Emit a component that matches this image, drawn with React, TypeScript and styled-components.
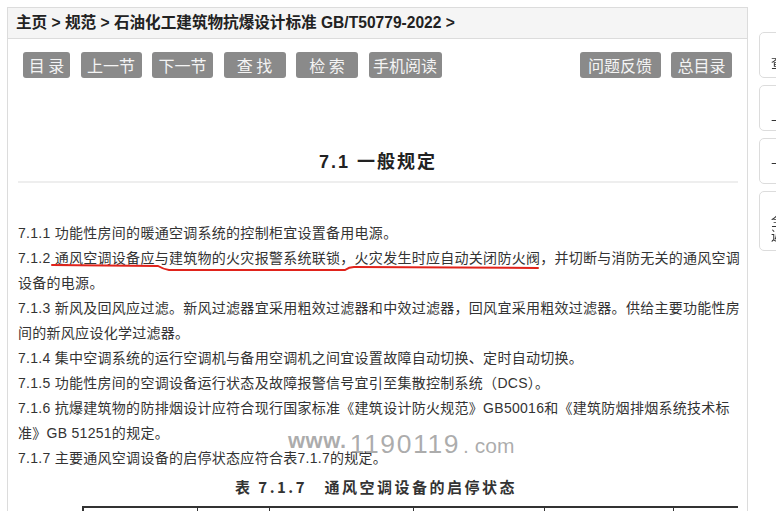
import styled, { createGlobalStyle } from "styled-components"
import React from "react"

const Global = createGlobalStyle`
  html, body {
    margin: 0;
    padding: 0;
    background: #fff;
    overflow: hidden;
  }
  body {
    font-family: "Liberation Sans", "Noto Sans CJK SC", sans-serif;
    color: #333;
  }
`

const leftBtns = [
  { t: "目 录", w: 47 },
  { t: "上一节", w: 61 },
  { t: "下一节", w: 61 },
  { t: "查 找", w: 62 },
  { t: "检 索", w: 62 },
  { t: "手机阅读", w: 73 },
]

const rightBtns = [
  { t: "问题反馈", w: 81 },
  { t: "总目录", w: 61 },
]

const side = [
  { t: ["查看"], h: 46 },
  { t: ["上一节"], h: 46 },
  { t: ["下一节"], h: 46 },
  { t: ["全文", "返回"], h: 60 },
]

const cols = [114, 72, 144, 131, 129]

const App = () => {
  return (
    <Page>
      <Global />
      <Container>
        <Crumb>主页 &gt; 规范 &gt; 石油化工建筑物抗爆设计标准 GB/T50779-2022 &gt;</Crumb>
        <Content>
          <Toolbar>
            <Group>
              {leftBtns.map((b) => (
                <Btn key={b.t} $w={b.w}>{b.t}</Btn>
              ))}
            </Group>
            <Group>
              {rightBtns.map((b) => (
                <Btn key={b.t} $w={b.w}>{b.t}</Btn>
              ))}
            </Group>
          </Toolbar>
          <Title>7.1 一般规定</Title>
          <Rule />
          <Body>
            <Line>7.1.1 功能性房间的暖通空调系统的控制柜宜设置备用电源。</Line>
            <Line>7.1.2 通风空调设备应与建筑物的火灾报警系统联锁，火灾发生时应自动关闭防火阀，并切断与消防无关的通风空调</Line>
            <Line>设备的电源。</Line>
            <Line>7.1.3 新风及回风应过滤。新风过滤器宜采用粗效过滤器和中效过滤器，回风宜采用粗效过滤器。供给主要功能性房</Line>
            <Line>间的新风应设化学过滤器。</Line>
            <Line>7.1.4 集中空调系统的运行空调机与备用空调机之间宜设置故障自动切换、定时自动切换。</Line>
            <Line>7.1.5 功能性房间的空调设备运行状态及故障报警信号宜引至集散控制系统（DCS）。</Line>
            <Line>7.1.6 抗爆建筑物的防排烟设计应符合现行国家标准《建筑设计防火规范》GB50016和《建筑防烟排烟系统技术标</Line>
            <Line>准》GB 51251的规定。</Line>
            <Line>7.1.7 主要通风空调设备的启停状态应符合表7.1.7的规定。</Line>
            <Mark viewBox="0 0 720 12" width="720" height="12">
              <path
                d="M34 2 L140 3 Q145 6 151 7 L327 7 Q331 4 336 4 L520 5"
                fill="none"
                stroke="#e0231b"
                strokeWidth="2"
                strokeLinecap="round"
              />
            </Mark>
            <Watermark>
              <Wm $s={22} $lift={5} $b>www.</Wm>
              <Wm $s={26.5} $ls={1.6}>1190119</Wm>
              <Wm $s={21} $ls={0}>. com</Wm>
            </Watermark>
          </Body>
          <Caption>表 7.1.7　通风空调设备的启停状态</Caption>
          <Table>
            {cols.map((w, i) => (
              <Cell key={i} $w={w} />
            ))}
          </Table>
        </Content>
      </Container>
      <Side>
        {side.map((s, i) => (
          <SideItem key={i} $h={s.h}>
            {s.t.map((l) => (
              <span key={l}>{l}</span>
            ))}
          </SideItem>
        ))}
      </Side>
    </Page>
  )
}

export default App

const Page = styled.div`
  width: 776px;
  height: 511px;
  padding: 7px 0 0 7px;
  box-sizing: border-box;
  overflow: hidden;
`

const Container = styled.div`
  width: 741px;
  height: 520px;
  box-sizing: border-box;
  border: 1px solid #dcdcdc;
  border-bottom: none;
`

const Crumb = styled.div`
  height: 30px;
  background: #f5f5f5;
  border-bottom: 1px solid #dcdcdc;
  padding-left: 8px;
  font-size: 15.6px;
  font-weight: bold;
  line-height: 30px;
  color: #222;
  white-space: nowrap;
`

const Content = styled.div`
  padding: 13px 9px 0 10px;
`

const Toolbar = styled.div`
  display: flex;
  justify-content: space-between;
  padding: 0 6px 0 5px;
`

const Group = styled.div`
  display: flex;
  gap: 10.5px;
`

const Btn = styled.div<{ $w: number }>`
  width: ${(p) => p.$w}px;
  height: 26px;
  background: #8a8a8a;
  border-radius: 3px;
  color: #f4f4f4;
  font-family: "Noto Sans CJK SC", sans-serif;
  font-size: 16px;
  line-height: 26px;
  text-align: center;
  white-space: nowrap;
`

const Title = styled.div`
  margin-top: 72px;
  height: 24px;
  text-align: center;
  font-family: "Liberation Sans", "Noto Sans CJK SC", sans-serif;
  font-size: 18px;
  font-weight: bold;
  line-height: 24px;
  letter-spacing: 2px;
  color: #222;
`

const Rule = styled.div`
  margin-top: 7px;
  height: 2px;
  background: #eeeeee;
`

const Body = styled.div`
  position: relative;
  margin-top: 38px;
`

const Line = styled.div`
  height: 25px;
  font-size: 14px;
  line-height: 25px;
  letter-spacing: 0.28px;
  color: #333;
  white-space: nowrap;
`

const Mark = styled.svg`
  position: absolute;
  left: 0;
  top: 42px;
`

const Watermark = styled.div`
  position: absolute;
  left: 270px;
  top: 208px;
  height: 30px;
  display: flex;
  align-items: baseline;
  gap: 3px;
  font-family: "Liberation Sans", sans-serif;
  line-height: 30px;
  color: rgba(150, 150, 150, 0.78);
  white-space: nowrap;
`

const Wm = styled.span<{ $s: number; $b?: boolean; $lift?: number; $ls?: number }>`
  position: relative;
  top: ${(p) => -(p.$lift || 0)}px;
  font-size: ${(p) => p.$s}px;
  font-weight: ${(p) => (p.$b ? "bold" : "normal")};
  letter-spacing: ${(p) => p.$ls ?? 0.5}px;
`

const Caption = styled.div`
  margin-top: 5px;
  height: 22px;
  text-align: center;
  padding-right: 4px;
  font-family: "Noto Sans CJK SC", sans-serif;
  font-size: 15px;
  font-weight: bold;
  letter-spacing: 2.5px;
  line-height: 22px;
  color: #333;
`

const Table = styled.div`
  display: flex;
  margin: 8px 0 0 64px;
  border-top: 2px solid #333;
  border-left: 2px solid #333;
  height: 30px;
`

const Cell = styled.div<{ $w: number }>`
  width: ${(p) => p.$w}px;
  box-sizing: border-box;
  border-right: 1.5px solid #333;
`

const Side = styled.div`
  position: fixed;
  left: 759px;
  top: 32px;
  display: flex;
  flex-direction: column;
  gap: 7px;
`

const SideItem = styled.div<{ $h: number }>`
  width: 60px;
  height: ${(p) => p.$h}px;
  box-sizing: border-box;
  border: 1px solid #dcdcdc;
  border-radius: 5px;
  background: #fff;
  display: flex;
  flex-direction: column;
  justify-content: flex-end;
  padding: 0 0 8px 11px;
  font-family: "Noto Sans CJK SC", sans-serif;
  font-size: 13px;
  line-height: 15px;
  color: #333;
`
